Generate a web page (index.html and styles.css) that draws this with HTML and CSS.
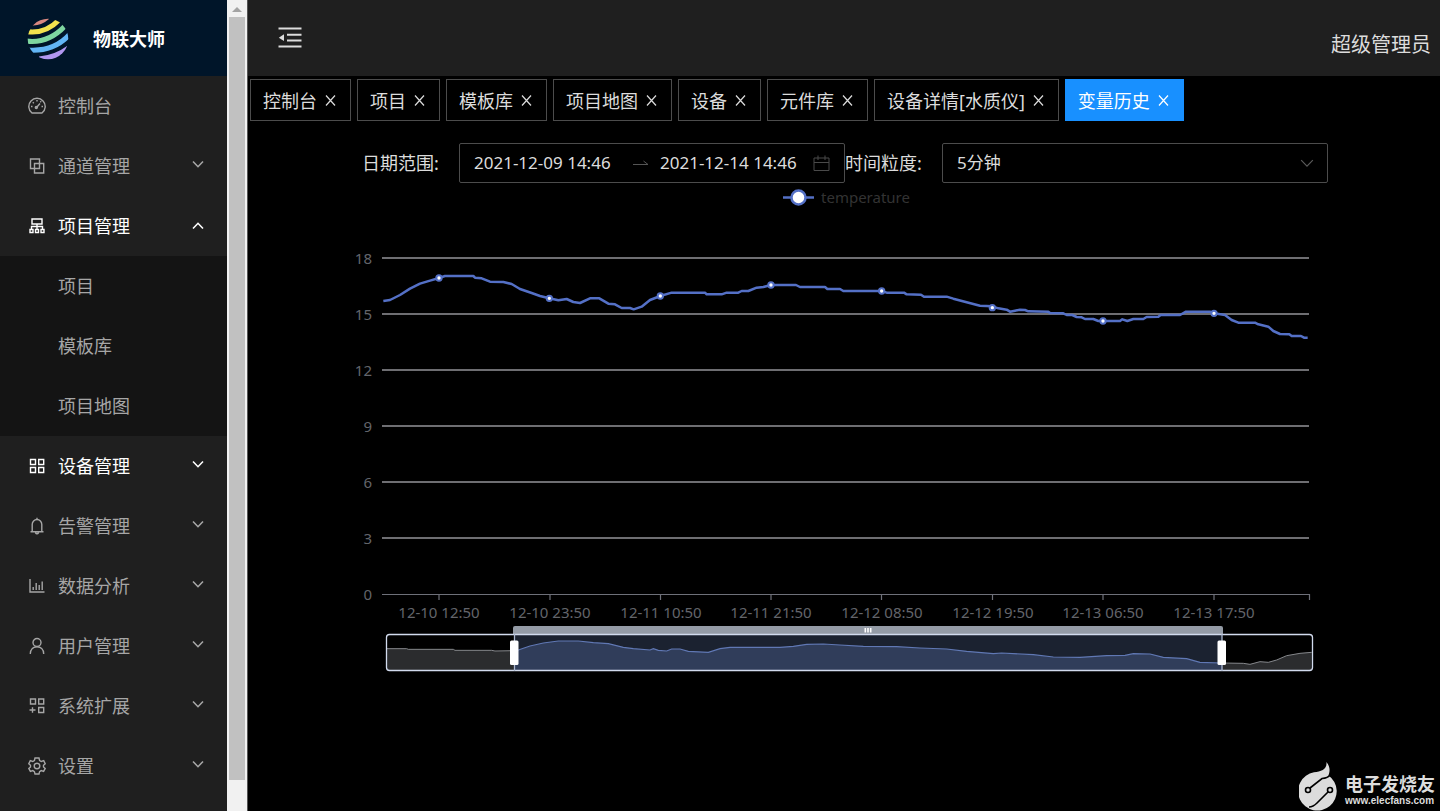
FILE: index.html
```html
<!DOCTYPE html>
<html lang="zh-CN">
<head>
<meta charset="utf-8">
<title>物联大师</title>
<link rel="stylesheet" href="styles.css">
</head>
<body>
<svg class="defs" aria-hidden="true">
  <symbol id="down" viewBox="0 0 12 12"><path d="M1 3.5 6 8.7 11 3.5"/></symbol>
  <symbol id="up" viewBox="0 0 12 12"><path d="M1 8.5 6 3.3 11 8.5"/></symbol>
  <symbol id="close" viewBox="0 0 11 11"><path d="M1 0.5 10 10.5M10 0.5 1 10.5"/></symbol>
</svg>
<div class="app">
  <aside class="sidebar">
    <div class="side-main">
      <div class="brand">
        <svg class="brand-logo" viewBox="0 0 42 42" aria-hidden="true">
          <defs><clipPath id="ball"><circle cx="21" cy="21" r="20.3"/></clipPath></defs>
          <g clip-path="url(#ball)" fill="none">
            <path d="M5 7.500Q14 8 22 1V-2H5Z" fill="#d98880"/>
            <path d="M-1 13.500Q18 16.500 32 2" stroke="#f2e24e" stroke-width="5"/>
            <path d="M-1 23Q21 26 38 8" stroke="#7ed6a0" stroke-width="5"/>
            <path d="M1 32Q27 34 43 16" stroke="#62b5f5" stroke-width="5"/>
            <path d="M12 38.500Q28 37 40 28V43H12Z" fill="#b197f0"/>
          </g>
        </svg>
        <span>物联大师</span>
      </div>
      <nav class="menu">
        <button class="item"><svg class="ico" viewBox="0 0 18 18"><path d="M4 16A8.200 8.200 0 1 1 14 16ZM8.300 10.700 12 6.500M9 3V4.600M3 9.500H4.500M13.500 9.500H15M4.800 5.200 5.800 6.200M12.300 5.200 13.200 4.300"/><circle cx="8.300" cy="10.500" r="1"/></svg><span>控制台</span></button>
        <button class="item"><svg class="ico" viewBox="0 0 18 18"><path d="M2.500 2H11.500V11.500H2.500ZM6.500 6.500H15.700V16H6.500Z"/></svg><span>通道管理</span><svg class="arrow"><use href="#down"/></svg></button>
        <button class="item on"><svg class="ico" viewBox="0 0 18 18"><path d="M4 2H14V7H4ZM9 7V12M3.500 12V9.500H14.500V12M2 12.500H5V15.500H2ZM7.500 12.500H10.500V15.500H7.500ZM13 12.500H16V15.500H13Z"/></svg><span>项目管理</span><svg class="arrow open"><use href="#up"/></svg></button>
        <div class="submenu">
          <button class="item sub"><span>项目</span></button>
          <button class="item sub"><span>模板库</span></button>
          <button class="item sub"><span>项目地图</span></button>
        </div>
        <button class="item on"><svg class="ico" viewBox="0 0 18 18"><path d="M2.500 2.500H7.500V7.500H2.500ZM10.700 2.500H15.700V7.500H10.700ZM2.500 10.500H7.500V15.500H2.500ZM10.700 10.500H15.700V15.500H10.700Z"/></svg><span>设备管理</span><svg class="arrow"><use href="#down"/></svg></button>
        <button class="item"><svg class="ico" viewBox="0 0 18 18"><path d="M2.500 14.700H15.500M4.200 14.500V7.500A4.800 5 0 0 1 13.800 7.500V14.500M9 .7V2.500M7.300 15.500Q9 18 10.700 15.500"/></svg><span>告警管理</span><svg class="arrow"><use href="#down"/></svg></button>
        <button class="item"><svg class="ico" viewBox="0 0 18 18"><path d="M2 2V15H16.500M5.200 13V10M8.200 13V6M11.200 13V8M14.200 13V4.500"/></svg><span>数据分析</span><svg class="arrow"><use href="#down"/></svg></button>
        <button class="item"><svg class="ico" viewBox="0 0 18 18"><circle cx="9" cy="5.500" r="4"/><path d="M2.300 17C2.300 12 5.500 9.700 9 9.700S15.700 12 15.700 17"/></svg><span>用户管理</span><svg class="arrow"><use href="#down"/></svg></button>
        <button class="item"><svg class="ico" viewBox="0 0 18 18"><path d="M2.500 2H7.500V7H2.500ZM10.700 2H15.700V7H10.700ZM10.700 10.500H15.700V15.500H10.700ZM1.500 13H7.500M4.500 10.300V15.700"/></svg><span>系统扩展</span><svg class="arrow"><use href="#down"/></svg></button>
        <button class="item"><svg class="ico" viewBox="0 0 18 18"><circle cx="9" cy="9" r="2.800"/><path d="M7 1H11L11.600 3.500 13.300 4.500 15.700 3.700 17.200 6.700 15.500 8.300V9.900L17.200 11.400 15.600 14.400 13.200 13.600 11.600 14.600 11 17H7L6.400 14.600 4.800 13.600 2.400 14.400 .8 11.400 2.500 9.900V8.300L.8 6.700 2.300 3.700 4.700 4.500 6.400 3.500Z"/></svg><span>设置</span><svg class="arrow"><use href="#down"/></svg></button>
      </nav>
    </div>
    <div class="scrollbar" aria-hidden="true"><i class="scroll-up"></i><i class="thumb"></i></div>
  </aside>
  <main class="main">
    <header class="header">
      <button class="fold" aria-label="收起菜单">
        <svg viewBox="0 0 24 22"><path d="M.5 1.500H23.500M9 7.700H23.500M9 13.500H23.500M.5 19.500H23.500"/><path class="solid" d="M6 7.300V14L.8 10.700Z"/></svg>
      </button>
      <span class="user">超级管理员</span>
    </header>
    <div class="tabs">
      <div class="tab"><a href="#">控制台</a><button aria-label="关闭"><svg><use href="#close"/></svg></button></div>
      <div class="tab"><a href="#">项目</a><button aria-label="关闭"><svg><use href="#close"/></svg></button></div>
      <div class="tab"><a href="#">模板库</a><button aria-label="关闭"><svg><use href="#close"/></svg></button></div>
      <div class="tab"><a href="#">项目地图</a><button aria-label="关闭"><svg><use href="#close"/></svg></button></div>
      <div class="tab"><a href="#">设备</a><button aria-label="关闭"><svg><use href="#close"/></svg></button></div>
      <div class="tab"><a href="#">元件库</a><button aria-label="关闭"><svg><use href="#close"/></svg></button></div>
      <div class="tab"><a href="#">设备详情[水质仪]</a><button aria-label="关闭"><svg><use href="#close"/></svg></button></div>
      <div class="tab current"><a href="#">变量历史</a><button aria-label="关闭"><svg><use href="#close"/></svg></button></div>
    </div>
    <form class="filters">
      <label for="from">日期范围:</label>
      <div class="box range">
        <input id="from" type="text" value="2021-12-09 14:46">
        <svg class="to" viewBox="0 0 16 8"><path d="M0 5.500H15L10.500 2"/></svg>
        <input id="until" type="text" value="2021-12-14 14:46" aria-label="结束时间">
        <svg class="cal" viewBox="0 0 17 17"><path d="M1 3H16V15.500H1ZM1 7.500H16M5 .5V5M12 .5V5"/></svg>
      </div>
      <label for="step">时间粒度:</label>
      <div class="box pick">
        <select id="step"><option>5分钟</option></select>
        <svg class="caret"><use href="#down"/></svg>
      </div>
    </form>
    <svg class="chart" viewBox="248 184 1192 500" role="img" aria-label="temperature">
      <g class="legend">
        <path d="M783 197.500H814"/><circle cx="798.500" cy="197.500" r="7"/>
        <text x="821" y="203">temperature</text>
      </g>
      <path class="grid" d="M382 258H1309M382 314H1309M382 370H1309M382 426H1309M382 482H1309M382 538H1309"/>
      <path class="axis" d="M382 594.500H1309.500V600M439 594V600M550 594V600M660.500 594V600M771 594V600M881.500 594V600M992.500 594V600M1103 594V600M1214 594V600"/>
      <g class="ticks end">
        <text x="372" y="264">18</text><text x="372" y="320">15</text><text x="372" y="376">12</text><text x="372" y="432">9</text><text x="372" y="488">6</text><text x="372" y="544">3</text><text x="372" y="600">0</text>
      </g>
      <g class="ticks mid">
        <text x="439" y="618">12-10 12:50</text><text x="550" y="618">12-10 23:50</text><text x="661" y="618">12-11 10:50</text><text x="771" y="618">12-11 21:50</text><text x="882" y="618">12-12 08:50</text><text x="993" y="618">12-12 19:50</text><text x="1103" y="618">12-13 06:50</text><text x="1214" y="618">12-13 17:50</text>
      </g>
      <g transform="translate(340 240) scale(.33333)">
        <polyline class="series" points="130,183 150,180 180,165 210,146 240,131 270,122 297,114 315,108 400,108 405,113 425,115 450,125 490,126 515,132 540,147 575,159 600,168 628,175 655,181 680,177 700,186 720,189 750,175 778,175 805,191 825,193 845,204 870,204 881,208 905,200 930,180 961,168 995,158 1095,158 1100,163 1145,163 1160,158 1195,158 1205,153 1225,153 1250,143 1270,141 1293,135 1368,135 1380,141 1455,141 1462,147 1500,147 1510,153 1625,153 1640,158 1692,158 1700,163 1743,164 1752,170 1820,170 1840,176 1920,197 1957,199 1975,205 2000,209 2010,215 2025,212 2040,209 2055,210 2065,214 2125,215 2130,219 2170,220 2180,225 2197,225 2210,231 2225,232 2235,237 2260,237 2275,243 2340,243 2347,238 2362,243 2380,237 2410,237 2420,231 2455,230 2462,225 2520,225 2538,215 2610,215 2622,220 2655,225 2675,240 2695,248 2745,248 2755,253 2785,260 2800,273 2820,282 2848,283 2855,288 2883,288 2892,293 2903,293"/>
        <g class="dots"><circle cx="297" cy="114" r="8"/><circle cx="628" cy="175" r="8"/><circle cx="961" cy="168" r="8"/><circle cx="1293" cy="135" r="8"/><circle cx="1625" cy="153" r="8"/><circle cx="1957" cy="203" r="8"/><circle cx="2289" cy="243" r="8"/><circle cx="2622" cy="220" r="8"/></g>
      </g>
      <defs>
        <clipPath id="picked"><rect x="522" y="160" width="2124" height="112"/></clipPath>
        <path id="shade" d="M140 206 200 206 205 208 340 208 345 211 455 211 465 213 520 212 535 210 570 198 610 189 655 183 715 183 760 188 805 191 850 202 880 206 930 210 940 206 955 211 980 213 995 207 1020 207 1045 214 1105 217 1140 206 1170 202 1320 202 1360 199 1400 193 1450 192 1500 195 1570 199 1670 200 1740 204 1820 207 1880 214 1960 221 1985 219 2080 224 2140 231 2220 232 2300 227 2355 226 2380 221 2430 222 2470 232 2540 236 2580 247 2645 249 2710 250 2730 253 2760 245 2785 247 2810 240 2840 227 2880 220 2915 217"/>
        <path id="area" d="M140 271V206H200L205 208H340L345 211H455L465 213 520 212 535 210 570 198 610 189 655 183 715 183 760 188 805 191 850 202 880 206 930 210 940 206 955 211 980 213 995 207 1020 207 1045 214 1105 217 1140 206 1170 202 1320 202 1360 199 1400 193 1450 192 1500 195 1570 199 1670 200 1740 204 1820 207 1880 214 1960 221 1985 219 2080 224 2140 231 2220 232 2300 227 2355 226 2380 221 2430 222 2470 232 2540 236 2580 247 2645 249 2710 250 2730 253 2760 245 2785 247 2810 240 2840 227 2880 220 2915 217V271Z"/>
      </defs>
      <g transform="translate(340 580) scale(.33333)">
        <use href="#area" fill="#2b2c2e"/>
        <use href="#shade" class="rest-line"/>
        <g clip-path="url(#picked)">
          <rect x="522" y="160" width="2124" height="112" fill="#1b2230"/>
          <use href="#area" fill="#303d5a"/>
          <use href="#shade" class="pick-line"/>
        </g>
      </g>
      <path d="M513 634V628Q513 626 515 626H1221Q1223 626 1223 628V634Z" fill="#949ba6"/>
      <rect class="frame" x="386.500" y="634.500" width="926" height="36" rx="3"/>
      <path class="edge" d="M514.500 634V671M1222 634V671"/>
      <rect x="510" y="640.500" width="8.500" height="24.500" rx="1.500" fill="#fff"/>
      <rect x="1217.500" y="640.500" width="8.500" height="24.500" rx="1.500" fill="#fff"/>
      <path d="M865.300 628V632.500M868 628V632.500M870.700 628V632.500" stroke="#fff" stroke-width="1.600"/>
    </svg>
  </main>
</div>
<div class="watermark">
  <svg viewBox="0 0 40 50" aria-hidden="true">
    <path fill="#dcdcdc" d="M27.500 1C32 7 30.500 11 29.500 14.500A19.300 19.300 0 1 1 15 11.300C22 10 28 9 27.500 1Z"/>
    <path d="M31 14Q29 17 23 17.500L11 27M10 46 Q14 46 18 42L29 31" fill="none" stroke="#000" stroke-width="1.600"/>
    <circle cx="9" cy="29" r="2.500" fill="#dcdcdc" stroke="#000" stroke-width="1.600"/>
    <circle cx="31" cy="29" r="2.500" fill="#dcdcdc" stroke="#000" stroke-width="1.600"/>
  </svg>
  <div><strong>电子发烧友</strong><small>www.elecfans.com</small></div>
</div>
</body>
</html>
```

FILE: styles.css
```css
* { box-sizing: border-box; }
body {
  margin: 0;
  background: #000;
  color: #dcdcdc;
  font: 18px/24px "Noto Sans", "Noto Sans CJK SC", sans-serif;
}
button, input, select {
  margin: 0;
  padding: 0;
  border: 0;
  background: none;
  color: inherit;
  font: inherit;
}
svg { fill: none; stroke: currentColor; flex: none; }
svg text, .defs { stroke: none; }
.defs { position: absolute; width: 0; height: 0; }
.app { display: flex; height: 100vh; overflow: hidden; }

.sidebar { display: flex; flex: none; width: 248px; }
.side-main { flex: 1; background: #1f1f1f; overflow: hidden; }
.brand {
  display: flex;
  align-items: center;
  gap: 24px;
  height: 76px;
  padding: 2px 27px 0;
  background: #001529;
  color: #fff;
  font-weight: 700;
}
.brand-logo { width: 42px; height: 42px; stroke: none; }
.item {
  display: flex;
  align-items: center;
  width: 100%;
  height: 60px;
  padding: 0 23px 0 28px;
  color: #a6a6a6;
  text-align: left;
}
.item.on { color: #fff; }
.ico { width: 18px; height: 18px; margin-right: 12px; stroke-width: 1.4; }
.item.sub { padding-left: 58px; }
.submenu { background: #141414; }
.arrow { width: 12px; height: 12px; margin: 0 0 4px auto; stroke-width: 1.6; }
.arrow.open { margin-bottom: 0; }
.scrollbar {
  display: flex;
  flex-direction: column;
  width: 21px;
  padding: 7px 2px 31px;
  background: #f1f1f1;
  border-right: 1px solid #555;
}
.scroll-up {
  align-self: center;
  border: 5px solid transparent;
  border-top: 0;
  border-bottom-color: #a3a3a3;
  margin-bottom: 5px;
}
.thumb { flex: 1; background: #c1c1c1; }

.main { flex: 1; min-width: 0; }
.header {
  display: flex;
  justify-content: space-between;
  align-items: center;
  height: 76px;
  padding: 0 9px 0 30px;
  background: #1f1f1f;
}
.fold svg { display: block; width: 24px; height: 22px; stroke-width: 2; }
.fold .solid { fill: currentColor; stroke: none; }
.user { padding-top: 14px; font-size: 20px; }
.tabs { display: flex; gap: 6px; padding: 3px 2px 0; }
.tab {
  display: flex;
  align-items: center;
  gap: 8px;
  height: 42px;
  padding: 1px 14px 0 12px;
  border: 1px solid #4c4c4c;
  white-space: nowrap;
}
.tab a { color: inherit; text-decoration: none; }
.tab svg { display: block; width: 11px; height: 11px; stroke-width: 1.2; }
.tab.current { background: #1890ff; border-color: #1890ff; color: #fff; }

.filters { display: flex; justify-content: center; margin-top: 22px; padding-left: 2px; font-size: 17px; }
.filters label { width: 97px; line-height: 40px; font-size: 18px; }
.box {
  display: flex;
  align-items: center;
  width: 386px;
  height: 40px;
  padding: 0 14px;
  border: 1px solid #4c4c4c;
  border-radius: 2px;
}
.range input { width: 140px; }
.to { width: 16px; height: 8px; margin: 0 11px 0 19px; color: #555; }
.cal { width: 17px; height: 17px; margin-left: auto; color: #4a4a4a; }
.pick { position: relative; padding: 0; }
.pick select { appearance: none; width: 100%; height: 38px; padding: 0 14px; }
.pick option { background: #1f1f1f; }
.caret { position: absolute; right: 13px; top: 12px; width: 14px; height: 14px; color: #5a5a5a; pointer-events: none; }

.chart { display: block; width: 100%; margin-top: 1px; stroke: none; font-size: 15px; }
.legend path { stroke: #5470c6; stroke-width: 2.5; }
.legend circle { fill: #fff; stroke: #5470c6; stroke-width: 2.5; }
.legend text { fill: #333; }
.grid { stroke: #939398; stroke-width: 1.6; }
.axis { stroke: #6e7079; stroke-width: 1.2; }
.ticks { fill: #63656b; }
.end { text-anchor: end; }
.mid { text-anchor: middle; }
.series { stroke: #5470c6; stroke-width: 7.5; stroke-linejoin: round; }
.dots circle { fill: #fff; stroke: #5470c6; stroke-width: 6; }
.rest-line { stroke: #86888c; stroke-width: 3; }
.pick-line { stroke: #6078b4; stroke-width: 3.5; }
.frame { stroke: #d2dbee; stroke-width: 1.3; }
.edge { stroke: #acb8d1; stroke-width: 1.3; }

.watermark {
  position: absolute;
  right: 5px;
  bottom: 0;
  display: flex;
  align-items: flex-end;
  gap: 6px;
  color: #dcdcdc;
}
.watermark svg { width: 40px; height: 50px; stroke: none; }
.watermark strong, .watermark small { display: block; white-space: nowrap; }
.watermark strong { font-size: 18px; line-height: 20px; }
.watermark small { padding-bottom: 3px; font: 700 10px/14px "Liberation Sans", sans-serif; }
```
